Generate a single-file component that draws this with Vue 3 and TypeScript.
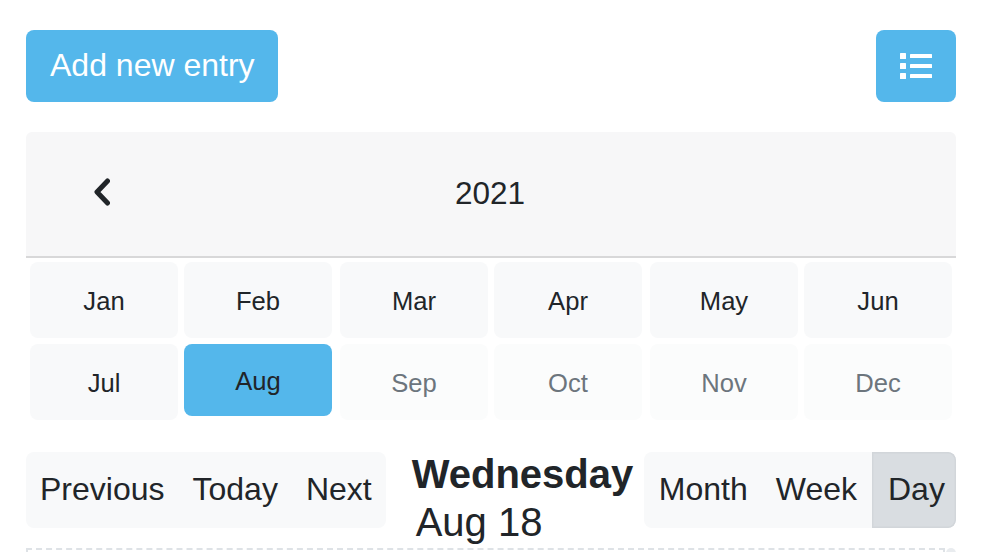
<template>
  <div class="page">
    <div class="top-bar">
      <button class="btn-primary">Add new entry</button>
      <button class="btn-primary btn-icon" aria-label="List view">
        <svg width="32" height="26" viewBox="0 0 32 26" fill="#fff">
          <rect x="0" y="0" width="6" height="6" rx="0.5" />
          <rect x="0" y="10" width="6" height="6" rx="0.5" />
          <rect x="0" y="20" width="6" height="6" rx="0.5" />
          <rect x="10" y="1" width="22" height="4" rx="0.5" />
          <rect x="10" y="11" width="22" height="4" rx="0.5" />
          <rect x="10" y="21" width="22" height="4" rx="0.5" />
        </svg>
      </button>
    </div>

    <div class="year-card">
      <div class="year-head">
        <button class="year-prev" aria-label="Previous year">
          <svg width="18" height="28" viewBox="0 0 18 28" fill="none">
            <path d="M15.500 3 L5 14 L15.500 25" stroke="#212529" stroke-width="5" stroke-linecap="round" stroke-linejoin="round" />
          </svg>
        </button>
        <span class="year-label">2021</span>
      </div>
      <div class="months">
        <div
          v-for="m in months"
          :key="m.name"
          class="month"
          :class="{ active: m.name === current, future: m.future }"
        >
          {{ m.name }}
        </div>
      </div>
    </div>

    <div class="toolbar">
      <div class="btn-group">
        <button v-for="b in navButtons" :key="b" class="tool-btn">{{ b }}</button>
      </div>
      <h2 class="title">
        <strong>Wednesday</strong>
        <span>Aug 18</span>
      </h2>
      <div class="btn-group view-group">
        <button
          v-for="v in views"
          :key="v"
          class="tool-btn"
          :class="{ selected: v === view }"
        >
          {{ v }}
        </button>
      </div>
    </div>

    <div class="day-row">
      <div class="day-grid"></div>
      <div class="scroll-thumb"></div>
    </div>
  </div>
</template>

<script setup lang="ts">
interface Month {
  name: string
  future: boolean
}

const names = ['Jan', 'Feb', 'Mar', 'Apr', 'May', 'Jun', 'Jul', 'Aug', 'Sep', 'Oct', 'Nov', 'Dec']
const current = 'Aug'

const months: Month[] = names.map((name, i) => ({ name, future: i > 7 }))
const navButtons = ['Previous', 'Today', 'Next']
const views = ['Month', 'Week', 'Day']
const view = 'Day'
</script>

<style scoped>
.page {
  height: 552px;
  box-sizing: border-box;
  padding: 30px 32px 0 26px;
  overflow: hidden;
  font-family: "Liberation Sans", Arial, sans-serif;
  color: #212529;
  background: #fff;
}

button {
  font-family: inherit;
  color: inherit;
  border: 0;
  margin: 0;
}

.top-bar {
  display: flex;
  justify-content: space-between;
  margin-bottom: 30px;
}

.btn-primary {
  height: 72px;
  padding: 0 23px 2px 24px;
  font-size: 32px;
  color: #fff;
  background: #54b7eb;
  border-radius: 8px;
}

.btn-icon {
  width: 80px;
  padding: 0;
  display: flex;
  align-items: center;
  justify-content: center;
}

.year-card {
  margin-bottom: 32px;
}

.year-head {
  height: 120px;
  padding-bottom: 4px;
  display: flex;
  align-items: center;
  background: #f7f7f8;
  border-bottom: 2px solid #d8d8d9;
  border-radius: 6px 6px 0 0;
}

.year-prev {
  display: flex;
  padding: 0;
  margin-left: 66px;
  background: none;
}

.year-label {
  margin: 2px 0 0 345px;
  font-size: 31.500px;
}

.months {
  display: grid;
  grid-template-columns: repeat(6, 1fr);
  row-gap: 6px;
  padding-top: 4px;
}

.month {
  height: 74px;
  padding-top: 2px;
  display: flex;
  align-items: center;
  justify-content: center;
  font-size: 25.600px;
  background: #f8f9fa;
  border-radius: 8px;
}

.month:nth-child(odd) {
  margin: 0 3px 0 4px;
}

.month:nth-child(even) {
  margin: 0 4px 0 3px;
}

.month.active {
  height: 70px;
  background: #54b7eb;
}

.month.future {
  color: #6c757d;
  background: #fbfcfc;
}

.toolbar {
  display: flex;
  align-items: flex-start;
}

.btn-group {
  display: flex;
  background: #f8f9fa;
  border-radius: 8px;
  overflow: hidden;
}

.tool-btn {
  height: 76px;
  padding: 0 14px 2px;
  font-size: 32px;
  background: none;
}

.view-group .tool-btn:first-child {
  padding-left: 15px;
}

.view-group .tool-btn:nth-child(2) {
  padding-right: 15px;
}

.tool-btn.selected {
  width: 84px;
  padding: 0 0 2px 16px;
  text-align: left;
  background: #d9dde1;
  box-shadow: inset 0 0 0 1.500px #d2d6da;
  border-radius: 0 8px 8px 0;
}

.title {
  margin: -2px auto 0 26px;
  font-size: 40px;
  line-height: 48px;
  font-weight: 400;
}

.title strong,
.title span {
  display: block;
}

.title span {
  padding-left: 4px;
}

.day-row {
  display: flex;
  margin-top: 2px;
}

.day-grid {
  flex: 1;
  height: 60px;
  border: 2px dashed #dee2e6;
}

.scroll-thumb {
  width: 10px;
  height: 60px;
  margin-left: 1px;
  background: #e9ecef;
  border-radius: 5px;
}
</style>
